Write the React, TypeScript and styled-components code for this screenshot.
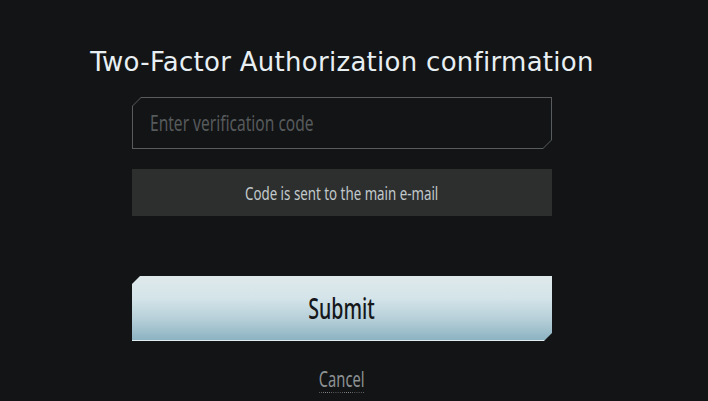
import React from "react";
import styled, { createGlobalStyle } from "styled-components";

const Global = createGlobalStyle`
  html, body {
    margin: 0;
    padding: 0;
    background: #131415;
    height: 100%;
  }
  body {
    font-family: "Liberation Sans", Arial, sans-serif;
  }
`;

const narrowFont = `"Noto Sans", "DejaVu Sans", sans-serif`;

const Page = styled.div`
  width: 684px;
  height: 401px;
  display: flex;
  flex-direction: column;
  align-items: center;
  padding-top: 44px;
  box-sizing: border-box;
`;

const Title = styled.h1`
  margin: 0;
  white-space: nowrap;
  font-family: "DejaVu Sans", sans-serif;
  font-weight: 400;
  font-size: 26px;
  line-height: 36px;
  color: #e8eff2;
  letter-spacing: 0.28px;
`;

const Form = styled.form`
  width: 420px;
  margin-top: 17px;
  display: flex;
  flex-direction: column;
`;

const chamfer = (c: number) =>
  `polygon(${c}px 0, 100% 0, 100% calc(100% - ${c}px), calc(100% - ${c}px) 100%, 0 100%, 0 ${c}px)`;

/* Narrow glyphs: the reference face is a tall condensed one */
const Narrow = styled.span<{ $scale: number }>`
  display: inline-block;
  white-space: nowrap;
  transform: scaleX(${(p) => p.$scale});
  transform-origin: center;
`;

const FieldFrame = styled.div`
  height: 52px;
  background: #585c5e;
  padding: 1px;
  box-sizing: border-box;
  clip-path: ${chamfer(9)};
`;

const FieldInner = styled.div`
  height: 100%;
  background: #131415;
  clip-path: ${chamfer(8)};
  overflow: hidden;
`;

const INPUT_SCALE = 0.74;

const Input = styled.input`
  display: block;
  width: calc(100% / ${INPUT_SCALE});
  height: 100%;
  box-sizing: border-box;
  border: none;
  outline: none;
  background: transparent;
  transform: scaleX(${INPUT_SCALE});
  transform-origin: left center;
  padding: 0 0 0 ${Math.round(17 / INPUT_SCALE)}px;
  font-family: ${narrowFont};
  font-size: 21px;
  color: #c8d0d2;
  &::placeholder {
    color: #565a5c;
  }
`;

const Notice = styled.div`
  margin-top: 20px;
  height: 47px;
  background: #2d2f2f;
  display: flex;
  align-items: center;
  justify-content: center;
  font-family: ${narrowFont};
  font-size: 18px;
  color: #c2c9cb;
`;

const SubmitButton = styled.button`
  margin-top: 60px;
  height: 65px;
  border: none;
  border-bottom: 1px solid #dfecf0;
  padding: 0;
  cursor: pointer;
  clip-path: ${chamfer(8)};
  background: linear-gradient(180deg, #dfe9eb 0%, #d4e4e9 35%, #b3cdd7 70%, #8cb2c1 100%);
  font-family: ${narrowFont};
  font-weight: 500;
  font-size: 28px;
  color: #15171a;
`;

const CancelRow = styled.div`
  display: flex;
  justify-content: center;
  margin-top: 26px;
`;

const CancelLink = styled.a`
  display: inline-block;
  font-family: ${narrowFont};
  font-size: 21px;
  line-height: 24px;
  padding-bottom: 2px;
  color: #8c9193;
  text-decoration: none;
  background-image: linear-gradient(to right, #8c9193 1px, transparent 1px);
  background-size: 3px 1px;
  background-repeat: repeat-x;
  background-position: 0 100%;
  cursor: pointer;
`;

export default function App() {
  return (
    <>
      <Global />
      <Page>
        <Title>Two-Factor Authorization confirmation</Title>
        <Form onSubmit={(e) => e.preventDefault()}>
          <FieldFrame>
            <FieldInner>
              <Input placeholder="Enter verification code" />
            </FieldInner>
          </FieldFrame>
          <Notice>
            <Narrow $scale={0.74}>Code is sent to the main e-mail</Narrow>
          </Notice>
          <SubmitButton type="submit">
            <Narrow $scale={0.7}>Submit</Narrow>
          </SubmitButton>
          <CancelRow>
            <Narrow $scale={0.7}>
              <CancelLink>Cancel</CancelLink>
            </Narrow>
          </CancelRow>
        </Form>
      </Page>
    </>
  );
}
